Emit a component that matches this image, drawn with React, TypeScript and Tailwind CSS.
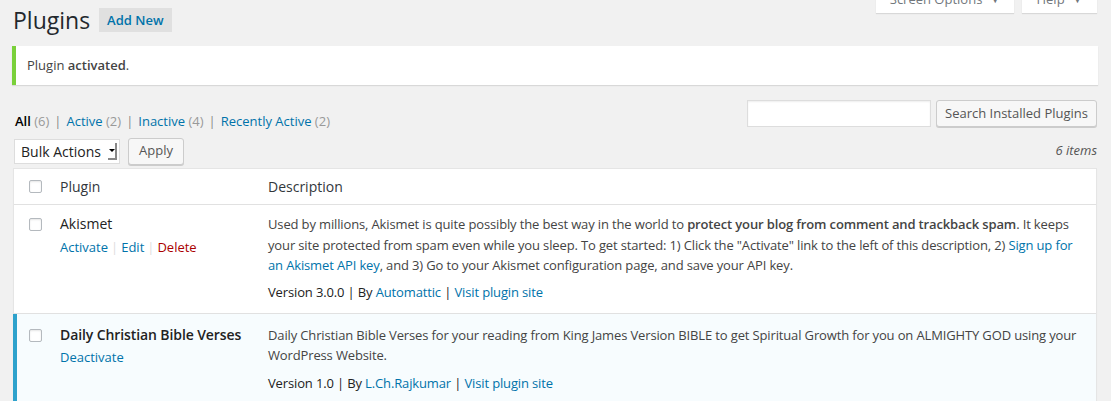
import React from "react";

const font = { fontFamily: "'Open Sans', 'Liberation Sans', sans-serif" };

function Checkbox() {
  return <span className="block w-[13px] h-[13px] border border-[#b4b9be] rounded-[2px] bg-white shadow-[inset_0_1px_2px_rgba(0,0,0,0.1)]" />;
}

function Sep() {
  return <span className="text-[#888] px-[5px]">|</span>;
}

export default function App() {
  return (
    <div className="w-[1111px] h-[401px] overflow-hidden bg-[#f1f1f1] text-[13px] text-[#444]" style={font}>
      <div className="relative pl-[13px] pr-[14px]">
        {/* screen meta tabs, cut off at the top */}
        <div className="absolute right-[14px] -top-[14px] flex gap-[8px]">
          <div className="w-[138px] h-[27px] bg-white shadow-[0_1px_1px_rgba(0,0,0,0.1)] flex items-center justify-center text-[#72777c]">
            Screen Options <span className="ml-2 text-[10px]">▼</span>
          </div>
          <div className="w-[75px] h-[27px] bg-white shadow-[0_1px_1px_rgba(0,0,0,0.1)] flex items-center justify-center text-[#72777c]">
            Help <span className="ml-2 text-[10px]">▼</span>
          </div>
        </div>

        {/* heading */}
        <div className="flex items-center pt-[3px] h-[37px]">
          <h1 className="text-[23px] leading-[29px] text-[#23282d] font-normal">Plugins</h1>
          <span className="ml-[9px] h-[24px] px-[8px] bg-[#e0e0e0] text-[#0073aa] font-semibold text-[13px] leading-[24px]">Add New</span>
        </div>

        {/* notice */}
        <div className="mt-[9px] -ml-[1px] mr-[-1px] h-[39px] bg-white border-l-4 border-[#7ad03a] shadow-[0_1px_1px_rgba(0,0,0,0.1)] flex items-center pl-[11px] text-[#444]">
          <span>Plugin <b className="font-semibold">activated</b>.</span>
        </div>

        {/* filters + search */}
        <div className="flex items-start justify-between mt-[15px]">
          <div className="pt-[11px] pl-[2px] text-[#999] leading-[20px]">
            <span className="text-[#000] font-semibold">All</span> (6)
            <Sep />
            <span className="text-[#0073aa]">Active</span> (2)
            <Sep />
            <span className="text-[#0073aa]">Inactive</span> (4)
            <Sep />
            <span className="text-[#0073aa]">Recently Active</span> (2)
          </div>
          <div className="flex gap-[5px]">
            <div className="w-[184px] h-[27px] bg-white border border-[#ddd] shadow-[inset_0_1px_2px_rgba(0,0,0,0.07)]" />
            <div className="w-[161px] h-[27px] bg-[#f7f7f7] border border-[#ccc] rounded-[3px] shadow-[0_1px_0_#ccc] flex items-center justify-center text-[#555]">
              Search Installed Plugins
            </div>
          </div>
        </div>

        {/* bulk actions */}
        <div className="flex items-center justify-between mt-[7px] h-[26px]">
          <div className="flex items-center gap-[8px] pl-[1px]">
            <div className="w-[106px] h-[25px] bg-white border border-[#ddd] flex items-center justify-between pl-[6px] pr-[2px] text-[#222] text-[14px]">
              <span>Bulk Actions</span>
              <span className="w-[9px] h-[17px] border-r-2 border-b-2 border-[#888] flex items-center justify-center">
                <span className="w-0 h-0 border-l-[3px] border-r-[3px] border-t-[3px] border-l-transparent border-r-transparent border-t-black" />
              </span>
            </div>
            <div className="w-[56px] h-[27px] bg-[#f7f7f7] border border-[#ccc] rounded-[3px] shadow-[0_1px_0_#ccc] flex items-center justify-center text-[#555]">
              Apply
            </div>
          </div>
          <span className="italic text-[#555]">6 items</span>
        </div>

        {/* table */}
        <div className="mt-[4px] bg-white border border-[#e5e5e5] shadow-[0_1px_1px_rgba(0,0,0,0.04)]">
          <div className="flex h-[36px] items-center border-b border-[#e1e1e1] text-[14px] text-[#32373c]">
            <div className="w-[36px] pl-[15px]"><Checkbox /></div>
            <div className="w-[208px] pl-[10px]">Plugin</div>
            <div className="pl-[10px]">Description</div>
          </div>

          {/* Akismet */}
          <div className="flex pt-[9px] pb-[11px] border-b border-[#e1e1e1]">
            <div className="w-[36px] pl-[15px] pt-[4px]"><Checkbox /></div>
            <div className="w-[208px] pl-[10px] leading-[20px]">
              <div className="text-[#222] text-[14px]">Akismet</div>
              <div className="mt-[3px] text-[13px]">
                <span className="text-[#0073aa]">Activate</span>
                <span className="text-[#ddd] px-[3px]">|</span>
                <span className="text-[#0073aa]">Edit</span>
                <span className="text-[#ddd] px-[3px]">|</span>
                <span className="text-[#a00]">Delete</span>
              </div>
            </div>
            <div className="flex-1 pl-[10px] pr-[10px] text-[#444] tracking-[-0.14px]">
              <p className="leading-[20.5px]">
                Used by millions, Akismet is quite possibly the best way in the world to <b className="font-semibold">protect your blog from comment and trackback spam</b>. It keeps your site protected from spam even while you sleep. To get started: 1) Click the "Activate" link to the left of this description, 2) <span className="text-[#0073aa]">Sign up for an Akismet API key</span>, and 3) Go to your Akismet configuration page, and save your API key.
              </p>
              <div className="mt-[6px] leading-[20px] text-[#222]">
                Version 3.0.0 | By <span className="text-[#0073aa]">Automattic</span> | <span className="text-[#0073aa]">Visit plugin site</span>
              </div>
            </div>
          </div>

          {/* Daily Christian Bible Verses */}
          <div className="flex pt-[11px] pb-[11px] bg-[#f7fcfe] border-l-4 border-[#2ea2cc] -ml-px">
            <div className="w-[33px] pl-[12px] pt-[4px]"><Checkbox /></div>
            <div className="w-[208px] pl-[10px] leading-[20px]">
              <div className="text-[#222] text-[14px] font-semibold tracking-[-0.1px]">Daily Christian Bible Verses</div>
              <div className="mt-[2px] text-[#0073aa]">Deactivate</div>
            </div>
            <div className="flex-1 pl-[10px] pr-[10px] text-[#444] tracking-[-0.14px]">
              <p className="leading-[20px]">
                Daily Christian Bible Verses for your reading from King James Version BIBLE to get Spiritual Growth for you on ALMIGHTY GOD using your WordPress Website.
              </p>
              <div className="mt-[8px] leading-[20px] text-[#222]">
                Version 1.0 | By <span className="text-[#0073aa]">L.Ch.Rajkumar</span> | <span className="text-[#0073aa]">Visit plugin site</span>
              </div>
            </div>
          </div>
        </div>
      </div>
    </div>
  );
}
